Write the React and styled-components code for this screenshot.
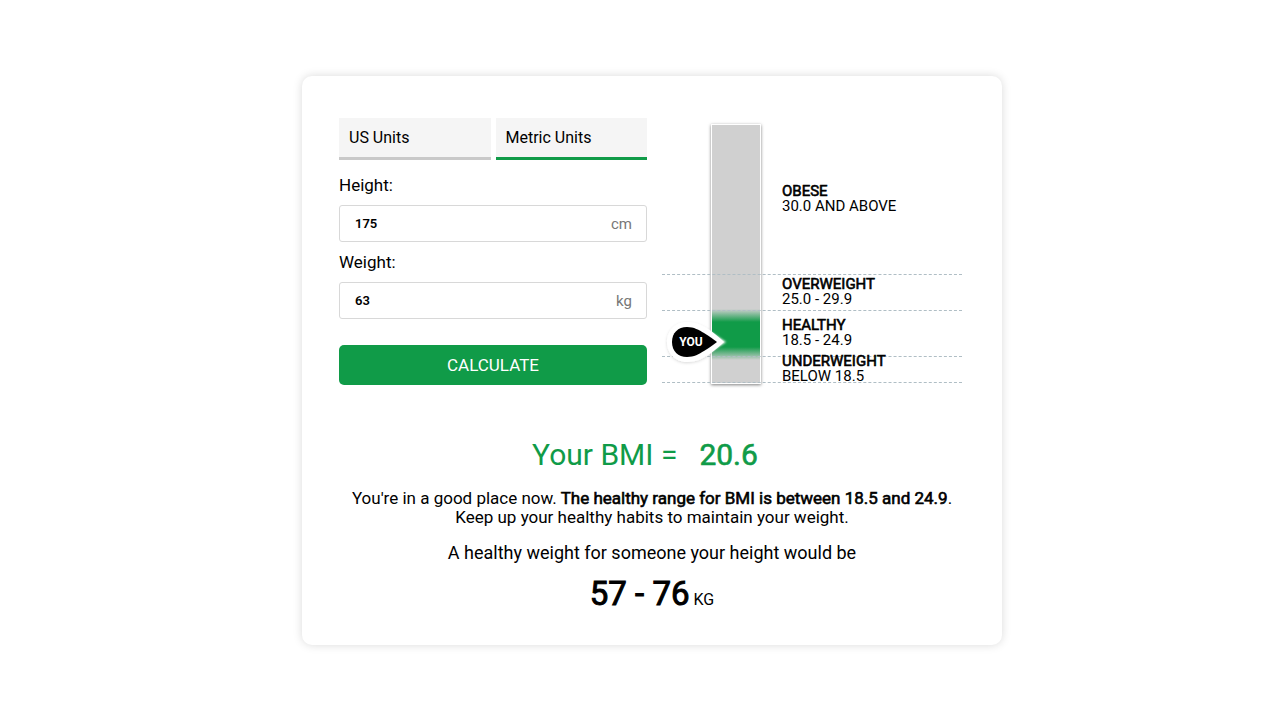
import React, { useState } from 'react';
import styled, { createGlobalStyle } from 'styled-components';

const GREEN = '#109b48';

const GlobalStyle = createGlobalStyle`
  *, *::before, *::after { box-sizing: border-box; }
  body {
    margin: 0;
    background: #fff;
    color: #000;
    font-family: Roboto, "Liberation Sans", sans-serif;
    font-size: 17px;
    font-weight: 400;
  }
`;

const Page = styled.main`
  min-height: 100vh;
  display: flex;
  align-items: center;
  justify-content: center;
  padding: 25px 0 24px 24px;
`;

const Card = styled.section`
  width: 100%;
  max-width: 700px;
  padding: 42px 37px 24px;
  border-radius: 10px;
  box-shadow: 0 0 10px rgba(0, 0, 0, 0.15);
`;

const Columns = styled.div`
  display: grid;
  grid-template-columns: 1fr 300px;
  column-gap: 15px;
  padding-right: 3px;
`;

const Form = styled.form`
  display: flex;
  flex-direction: column;
`;

const Tabs = styled.div`
  display: grid;
  grid-template-columns: 1fr 1fr;
  gap: 5px;
  margin-bottom: 15px;
`;

const Tab = styled.button`
  height: 42px;
  padding: 0 10px;
  border: 0;
  border-bottom: 3px solid ${({ $active }) => ($active ? GREEN : '#c9c9c9')};
  background: #f5f5f5;
  color: #000;
  font: inherit;
  font-size: 16px;
  text-align: left;
  cursor: pointer;
`;

const Label = styled.label`
  line-height: 20px;
  margin-bottom: 10px;
`;

const InputBox = styled.div`
  display: flex;
  align-items: center;
  height: 37px;
  padding: 0 14px 0 15px;
  margin-bottom: 10px;
  border: 1px solid #d8d8d8;
  border-radius: 3px;
`;

const Input = styled.input`
  flex: 1;
  min-width: 0;
  padding: 0;
  border: 0;
  outline: 0;
  background: none;
  color: #000;
  font-family: inherit;
  font-size: 13px;
  font-weight: 600;
`;

const Unit = styled.span`
  color: #777;
  font-size: 15px;
`;

const Calculate = styled.button`
  height: 40px;
  margin-top: 16px;
  border: 0;
  border-radius: 5px;
  background: ${GREEN};
  color: #fff;
  font: inherit;
  text-transform: uppercase;
  cursor: pointer;
`;

const Chart = styled.div`
  position: relative;
  display: grid;
  grid-template-columns: 49px 50px 1fr;
  align-self: start;
  margin-top: 6px;
`;

const Bar = styled.div`
  grid-area: 1 / 2;
  border: 1px solid #fff;
  background: linear-gradient(
    to bottom,
    #d0d0d0 184px,
    ${GREEN} 197px,
    ${GREEN} 222px,
    #d0d0d0 235px
  );
  box-shadow: 0 1px 3px rgba(0, 0, 0, 0.5);
`;

const Bands = styled.div`
  grid-area: 1 / 1 / 2 / 4;
  z-index: 1;
  padding-bottom: 1px;
`;

const Band = styled.div`
  display: flex;
  flex-direction: column;
  justify-content: center;
  height: ${({ $height }) => $height}px;
  padding: 0 0 1px 120px;
  border-bottom: 1px dashed #b0bec5;
  font-size: 15px;
  line-height: 15px;
  text-transform: uppercase;
`;

const Marker = styled.div`
  position: absolute;
  z-index: 2;
  top: 190px;
  left: 0;
  width: 72px;
  height: 56px;
`;

const MarkerShape = styled.svg`
  display: block;
`;

const Results = styled.div`
  margin-top: 51px;
  text-align: center;
`;

const Score = styled.h1`
  display: flex;
  justify-content: center;
  gap: 22px;
  margin: 0 14px 15px 0;
  color: ${GREEN};
  font-size: 30px;
  font-weight: 400;
  line-height: 38px;
`;

const Message = styled.p`
  margin: 0 0 16px;
  line-height: 19px;
`;

const Caption = styled.p`
  margin: 0;
  font-size: 18px;
  line-height: 20px;
`;

const Range = styled.p`
  margin: 10px 0 0;
  font-size: 16px;
  line-height: 42px;
`;

const Strong = styled.strong`
  font-weight: 400;
  -webkit-text-stroke: 0.6px currentColor;
`;

const RangeValue = styled(Strong)`
  font-size: 33px;
  -webkit-text-stroke-width: 1px;
`;

const bands = [
  { name: 'Obese', range: '30.0 and above', height: 151 },
  { name: 'Overweight', range: '25.0 - 29.9', height: 36 },
  { name: 'Healthy', range: '18.5 - 24.9', height: 46 },
  { name: 'Underweight', range: 'Below 18.5', height: 26 },
];

function Field({ id, label, unit, initial }) {
  const [value, setValue] = useState(initial);
  return (
    <>
      <Label htmlFor={id}>{label}</Label>
      <InputBox>
        <Input id={id} inputMode="numeric" value={value} onChange={(e) => setValue(e.target.value)} />
        <Unit>{unit}</Unit>
      </InputBox>
    </>
  );
}

function YouMarker() {
  return (
    <Marker>
      <MarkerShape width="72" height="56" viewBox="0 0 72 56" role="img" aria-label="You">
        <defs>
          <filter id="glow" x="-20%" y="-20%" width="140%" height="140%">
            <feDropShadow dx="0" dy="1" stdDeviation="1.5" floodColor="#000" floodOpacity="0.15" />
          </filter>
          <filter id="soft" x="-20%" y="-20%" width="140%" height="140%">
            <feGaussianBlur stdDeviation="1" />
          </filter>
        </defs>
        <path
          d="M25 8C13 8 5 17 5 28s8 20 20 20c10 0 17-4 24-9 5-4 9-7 13-11-4-4-8-7-13-11-7-5-14-9-24-9Z"
          fill="#fff"
          filter="url(#glow)"
        />
        <path d="M46 16 64 28 46 40Z" fill="#fff" filter="url(#soft)" />
        <path
          d="M25 13C16 13 10 19 10 28s6 15 15 15c7 0 12-3 17-6 5-3 9-6 13-9-4-3-8-6-13-9-5-3-10-6-17-6Z"
          fill="#000"
        />
        <text x="29" y="32" fill="#fff" fontSize="12" fontWeight="700" textAnchor="middle">YOU</text>
      </MarkerShape>
    </Marker>
  );
}

export default function App() {
  const [units, setUnits] = useState('Metric Units');
  return (
    <>
      <GlobalStyle />
      <Page>
        <Card>
          <Columns>
            <Form onSubmit={(e) => e.preventDefault()}>
              <Tabs>
                {['US Units', 'Metric Units'].map((name) => (
                  <Tab key={name} type="button" $active={units === name} onClick={() => setUnits(name)}>
                    {name}
                  </Tab>
                ))}
              </Tabs>
              <Field id="height" label="Height:" unit="cm" initial="175" />
              <Field id="weight" label="Weight:" unit="kg" initial="63" />
              <Calculate type="submit">Calculate</Calculate>
            </Form>
            <Chart>
              <Bar />
              <Bands>
                {bands.map((band) => (
                  <Band key={band.name} $height={band.height}>
                    <Strong>{band.name}</Strong>
                    <span>{band.range}</span>
                  </Band>
                ))}
              </Bands>
              <YouMarker />
            </Chart>
          </Columns>
          <Results>
            <Score>
              <span>Your BMI =</span>
              <Strong>20.6</Strong>
            </Score>
            <Message>
              You're in a good place now. <Strong>The healthy range for BMI is between 18.5 and 24.9</Strong>.
              <br />
              Keep up your healthy habits to maintain your weight.
            </Message>
            <Caption>A healthy weight for someone your height would be</Caption>
            <Range>
              <RangeValue>57 - 76</RangeValue> KG
            </Range>
          </Results>
        </Card>
      </Page>
    </>
  );
}
